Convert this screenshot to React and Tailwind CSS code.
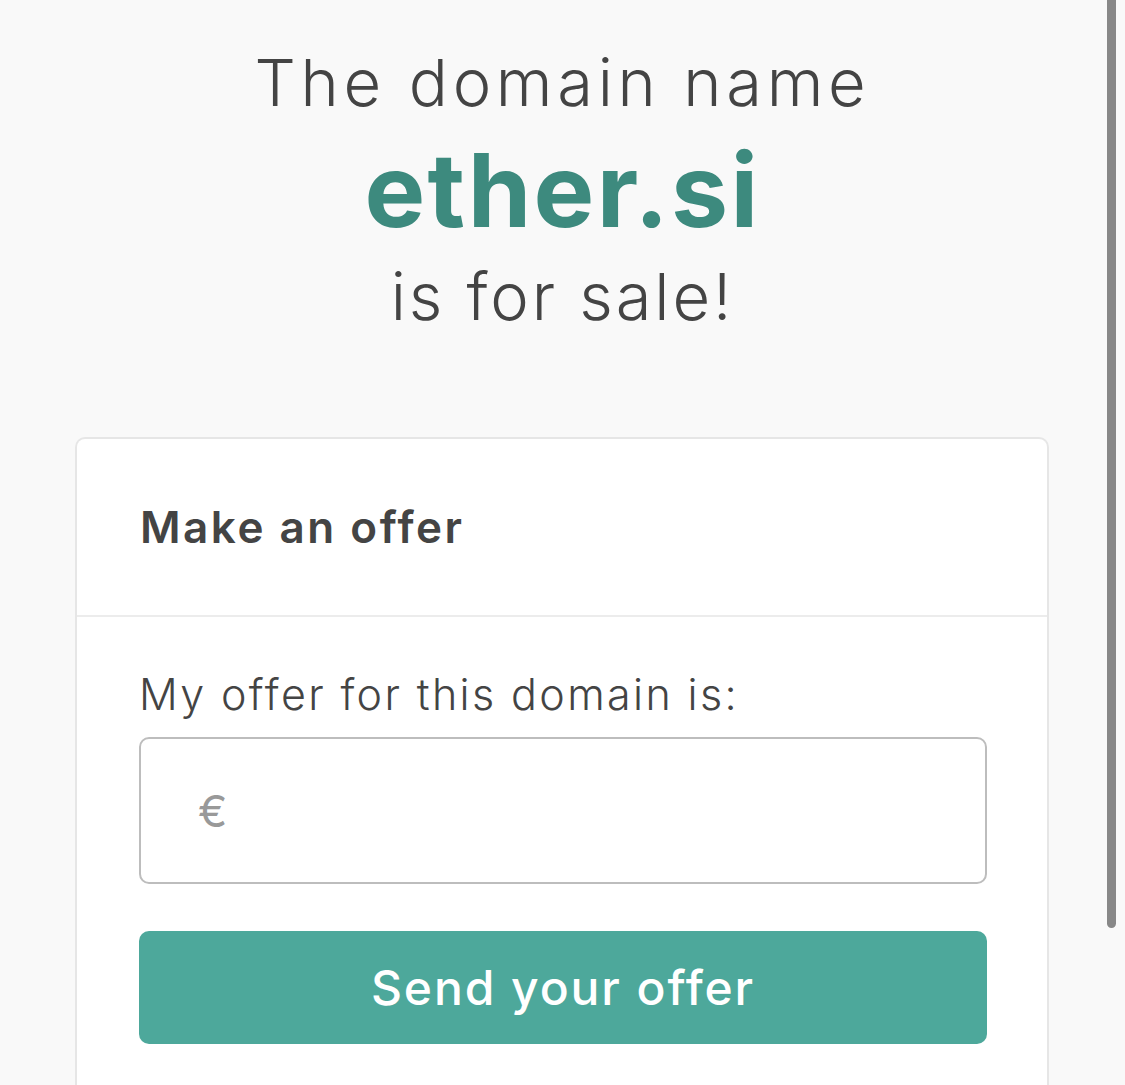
import React from "react";

const App = () => {
  return (
    <div
      className="relative h-[1085px] w-full overflow-hidden bg-[#f9f9f9] text-[#444]"
      style={{ fontFamily: "Inter, 'Open Sans', sans-serif" }}
    >
      {/* heading */}
      <div className="pt-[43px] text-center">
        <div className="text-[65px] leading-[80px] font-light tracking-[0.072em]">The domain name</div>
        <div className="text-[102px] leading-[134px] font-bold text-[#3d8a7e] tracking-[0.024em]">ether.si</div>
        <div className="text-[65px] leading-[80px] font-light tracking-[0.045em]">is for sale!</div>
      </div>

      {/* offer card */}
      <div className="ml-[75px] mt-[100px] w-[974px] rounded-t-[10px] border-2 border-b-0 border-[#e6e6e6] bg-white pb-[200px]">
        <div className="border-b-2 border-[#ececec] px-[63px] py-[60px]">
          <h2 className="text-[44px] leading-[56px] font-semibold tracking-[0.057em]">Make an offer</h2>
        </div>

        <div className="pl-[62px] pr-[60px] pt-[51px]">
          <label className="block text-[43px] leading-[52px] font-light tracking-[0.055em]">
            My offer for this domain is:
          </label>
          <div className="mt-[17px] flex h-[147px] items-center rounded-[10px] border-2 border-[#bdbdbd] pl-[57px]">
            <span className="text-[44px] text-[#999]">€</span>
          </div>
          <button className="mt-[47px] flex h-[113px] w-full items-center justify-center rounded-[10px] bg-[#4da89b] text-[48px] font-medium tracking-[0.04em] text-white">
            Send your offer
          </button>
        </div>
      </div>

      {/* scrollbar thumb */}
      <div className="absolute right-[9px] top-0 h-[928px] w-[9px] rounded-b-full bg-[#888]" />
    </div>
  );
};

export default App;
